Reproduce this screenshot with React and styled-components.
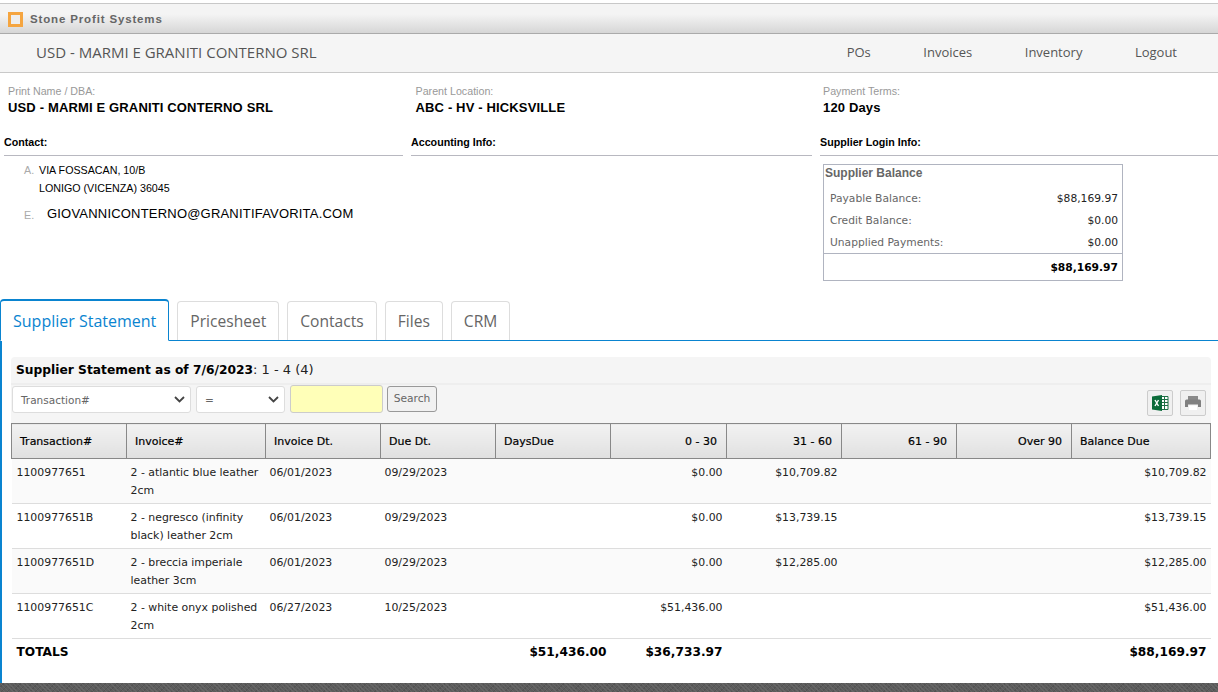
import React from "react"
import styled, { createGlobalStyle } from "styled-components"

const GlobalStyle = createGlobalStyle`
    html, body {
        margin: 0;
        padding: 0;
        background: #fff;
        overflow: hidden;
    }

    body {
        font-family: "Liberation Sans", Arial, sans-serif;
        color: #000;
    }
`

const Page = styled.div`
    width: 1218px;
    height: 692px;
    display: flex;
    flex-direction: column;
    overflow: hidden;
    background: #fff;
`

const TitleBar = styled.div`
    margin-top: 3px;
    height: 29px;
    flex: none;
    display: flex;
    align-items: center;
    gap: 7px;
    padding-left: 8px;
    border-top: 1px solid #c8c8c8;
    border-bottom: 1px solid #aaa;
    background: linear-gradient(#f4f4f4 0%, #f4f4f4 35%, #d6d6d6 100%);
`

const Logo = styled.div`
    width: 9px;
    height: 9px;
    border: 3px solid #f5a540;
    background: #eee;
    margin-top: 1px;
`

const BrandName = styled.span`
    font-size: 11.5px;
    font-weight: 700;
    letter-spacing: 0.85px;
    color: #666;
`

const NavBar = styled.div`
    height: 38px;
    flex: none;
    display: flex;
    align-items: center;
    justify-content: space-between;
    padding-left: 36px;
    background: #f5f5f5;
    border-bottom: 1px solid #c9c9c9;
    font-family: "Open Sans", sans-serif;
    color: #555;
`

const NavTitle = styled.div`
    font-size: 15px;
    margin-top: -2px;
`

const NavLinks = styled.div`
    display: flex;
    font-size: 13px;
    margin-right: 41px;
    gap: 52.5px;
    margin-top: -2px;
`

const InfoRow = styled.div`
    display: grid;
    flex: none;
    grid-template-columns: 407.5px 407.5px 1fr;
    padding: 12px 0 0 8px;
    height: 42px;
`

const InfoLabel = styled.div`
    font-size: 10.7px;
    line-height: 12px;
    color: #999;
`

const InfoValue = styled.div`
    font-size: 13px;
    font-weight: 700;
    line-height: 14px;
    margin-top: 4px;
    letter-spacing: 0.15px;
`

const Sections = styled.div`
    display: grid;
    flex: none;
    grid-template-columns: 407px 409px 1fr;
    padding-left: 4px;
`

const SectionHead = styled.div`
    font-size: 10.7px;
    font-weight: 700;
    line-height: 13px;
    padding: 9px 0 6px;
    margin-right: ${(p) => (p.$last ? "0" : "8px")};
    border-bottom: 1px solid #b8b8c0;
`

const SectionBody = styled.div`
    height: 143px;
`

const AddressRow = styled.div`
    display: flex;
    padding: 5px 0 0 20px;
`

const RowTag = styled.span`
    width: 15px;
    font-size: 10.7px;
    color: #aaa;
    margin-top: 3px;
`

const AddressText = styled.div`
    font-size: 10.7px;
    line-height: 18px;
`

const EmailRow = styled.div`
    display: flex;
    align-items: center;
    padding: 9px 0 0 20px;
`

const EmailText = styled.span`
    font-size: 13px;
    margin-left: 8px;
    letter-spacing: 0.2px;
`

const BalanceBox = styled.div`
    width: 298px;
    margin: 8px 0 0 3px;
    border: 1px solid #b0b4c0;
    font-family: "DejaVu Sans", Verdana, sans-serif;
    font-size: 10.7px;
`

const BalanceTitle = styled.div`
    font-family: "Liberation Sans", Arial, sans-serif;
    font-size: 12px;
    font-weight: 700;
    color: #666;
    line-height: 14px;
    padding: 1px 0 7px 1px;
`

const BalanceLine = styled.div`
    display: flex;
    justify-content: space-between;
    height: 22px;
    line-height: 24px;
    padding: 0 4px 0 6px;
    color: #666;

    b {
        font-weight: 400;
        color: #222;
    }
`

const BalanceTotal = styled.div`
    border-top: 1px solid #b0b4c0;
    text-align: right;
    font-weight: 700;
    height: 26px;
    line-height: 28px;
    padding-right: 4px;
`

const TabStrip = styled.div`
    height: 41px;
    flex: none;
    display: flex;
    align-items: flex-end;
    gap: 8px;
    border-bottom: 1px solid #0a84d0;
    font-family: "Open Sans", sans-serif;
    font-size: 15.6px;
`

const Tab = styled.div`
    height: 38px;
    line-height: 38px;
    padding: 0 12px;
    border-radius: 4px 4px 0 0;
    border: 1px solid #ddd;
    border-bottom: none;
    color: #666;
    ${(p) =>
        p.$active &&
        `
        height: 39px;
        line-height: 40px;
        font-size: 16px;
        color: #0a84d0;
        background: #fff;
        border: 1px solid #0a84d0;
        border-top-width: 2px;
        border-bottom: 1px solid #fff;
        margin-bottom: -1px;
    `}
`

const TabBody = styled.div`
    flex: 1;
    min-height: 0;
    border-left: 2px solid #0a84d0;
    padding: 16px 7px 0 9px;
`

const GridPanel = styled.div`
    background: #f5f5f5;
    border-radius: 4px 4px 0 0;
`

const GridTitle = styled.div`
    box-sizing: border-box;
    height: 28px;
    line-height: 26px;
    padding-left: 5px;
    border-bottom: 2px solid #eee;
    font-family: "DejaVu Sans", Verdana, sans-serif;
    font-size: 13px;
    color: #222;

    b {
        font-size: 12.25px;
        color: #000;
    }
`

const Toolbar = styled.div`
    height: 37px;
    display: flex;
    align-items: flex-start;
    padding: 1px 0 0 1px;
    gap: 5px;
`

const FieldSelect = styled.div`
    box-sizing: border-box;
    width: ${(p) => p.$w}px;
    height: 27px;
    display: flex;
    align-items: center;
    justify-content: space-between;
    padding: 0 5px 0 8px;
    background: #fff;
    border: 1px solid #ddd;
    border-radius: 3px;
    font-family: "DejaVu Sans", Verdana, sans-serif;
    font-size: 10.5px;
    color: #666;
`

const SearchInput = styled.div`
    box-sizing: border-box;
    width: 93px;
    height: 28px;
    margin-top: -1px;
    background: #ffffb8;
    border: 1px solid #ccc;
    border-radius: 3px;
`

const SearchButton = styled.div`
    box-sizing: border-box;
    width: 50px;
    height: 26px;
    margin-left: -1px;
    line-height: 23px;
    text-align: center;
    background: #f1f1f1;
    border: 1px solid #999;
    border-radius: 3px;
    font-family: "DejaVu Sans", Verdana, sans-serif;
    font-size: 10.7px;
    color: #666;
`

const ToolIcons = styled.div`
    display: flex;
    gap: 7px;
    margin-left: auto;
    margin-top: 4px;
    margin-right: 5px;
`

const IconButton = styled.div`
    box-sizing: border-box;
    width: 26px;
    height: 26px;
    display: flex;
    align-items: center;
    justify-content: center;
    border: 1px solid #ccc;
    border-radius: 2px;
    background: #f0f0f0;
`

const Table = styled.table`
    width: 1199px;
    border-collapse: collapse;
    table-layout: fixed;
    font-family: "DejaVu Sans", Verdana, sans-serif;
    font-size: 10.9px;
    background: #fff;
`

const HeadCell = styled.th`
    height: 35px;
    padding: 0 ${(p) => (p.$right ? "9px" : "8px")};
    box-sizing: border-box;
    border: 1px solid #888;
    background: linear-gradient(#f2f2f2, #e0e0e0);
    font-weight: 400;
    font-size: 11px;
    color: #000;
    text-align: ${(p) => (p.$right ? "right" : "left")};
    -webkit-text-stroke: 0.2px #000;
`

const BodyRow = styled.tr`
    height: 45px;
    background: ${(p) => (p.$shade ? "#fafafa" : "#fff")};
    border-bottom: 1px solid #ddd;
`

const Cell = styled.td`
    vertical-align: top;
    padding: 5px 4px 0;
    line-height: 18px;
    color: #222;
    text-align: ${(p) => (p.$right ? "right" : "left")};

    &:first-child {
        padding-left: 5px;
    }
`

const TotalCell = styled.td`
    padding: 4px 4px 0;
    line-height: 18px;
    font-weight: 700;
    font-size: 12.2px;
    text-align: ${(p) => (p.$right ? "right" : "left")};

    &:first-child {
        padding-left: 5px;
    }
`

const FooterBand = styled.div`
    height: 9px;
    flex: none;
    background-color: #5c5c5c;
    background-image: repeating-linear-gradient(45deg, #666 0 1px, transparent 1px 3px),
        repeating-linear-gradient(-45deg, #525252 0 1px, transparent 1px 4px);
`

const columns = [
    { label: "Transaction#", w: 115 },
    { label: "Invoice#", w: 139 },
    { label: "Invoice Dt.", w: 115 },
    { label: "Due Dt.", w: 115 },
    { label: "DaysDue", w: 115 },
    { label: "0 - 30", w: 116, right: true },
    { label: "31 - 60", w: 115, right: true },
    { label: "61 - 90", w: 115, right: true },
    { label: "Over 90", w: 115, right: true },
    { label: "Balance Due", w: 139 },
]

const rows = [
    ["1100977651", "2 - atlantic blue leather 2cm", "06/01/2023", "09/29/2023", "$0.00", "$10,709.82", "$10,709.82"],
    ["1100977651B", "2 - negresco (infinity black) leather 2cm", "06/01/2023", "09/29/2023", "$0.00", "$13,739.15", "$13,739.15"],
    ["1100977651D", "2 - breccia imperiale leather 3cm", "06/01/2023", "09/29/2023", "$0.00", "$12,285.00", "$12,285.00"],
    ["1100977651C", "2 - white onyx polished 2cm", "06/27/2023", "10/25/2023", "$51,436.00", "", "$51,436.00"],
]

function Chevron() {
    return (
        <svg width="11" height="7" viewBox="0 0 11 7" fill="none">
            <path d="M1 1l4.5 4.5L10 1" stroke="#444" strokeWidth="1.8" />
        </svg>
    )
}

function ExcelIcon() {
    return (
        <svg width="18" height="18" viewBox="0 0 18 18">
            <path d="M10 2.5h7v13h-7z" fill="#fff" stroke="#1d7044" />
            <path d="M10 5.5h7M10 8.5h7M10 11.5h7M13.5 2.5v13" stroke="#1d7044" />
            <path d="M1 2.5L11 1v16L1 15.5z" fill="#0b6b3a" />
            <path d="M4 6l3.5 6M7.5 6L4 12" stroke="#fff" strokeWidth="1.4" />
        </svg>
    )
}

function PrintIcon() {
    return (
        <svg width="18" height="16" viewBox="0 0 18 16">
            <path d="M4 1h10v4H4z" fill="#8a8a8a" />
            <path d="M2.5 4.5h13A1.5 1.5 0 0 1 17 6v6h-3V9.5H4V12H1V6a1.5 1.5 0 0 1 1.5-1.5z" fill="#808080" />
            <path d="M5 10.5h8V15H5z" fill="#fff" />
        </svg>
    )
}

export default function App() {
    return (
        <Page>
            <GlobalStyle />

            <TitleBar>
                <Logo />
                <BrandName>Stone Profit Systems</BrandName>
            </TitleBar>

            <NavBar>
                <NavTitle>USD - MARMI E GRANITI CONTERNO SRL</NavTitle>
                <NavLinks>
                    <span>POs</span>
                    <span>Invoices</span>
                    <span>Inventory</span>
                    <span>Logout</span>
                </NavLinks>
            </NavBar>

            <InfoRow>
                <div>
                    <InfoLabel>Print Name / DBA:</InfoLabel>
                    <InfoValue>USD - MARMI E GRANITI CONTERNO SRL</InfoValue>
                </div>
                <div>
                    <InfoLabel>Parent Location:</InfoLabel>
                    <InfoValue>ABC - HV - HICKSVILLE</InfoValue>
                </div>
                <div>
                    <InfoLabel>Payment Terms:</InfoLabel>
                    <InfoValue>120 Days</InfoValue>
                </div>
            </InfoRow>

            <Sections>
                <div>
                    <SectionHead>Contact:</SectionHead>
                    <SectionBody>
                        <AddressRow>
                            <RowTag>A.</RowTag>
                            <AddressText>
                                VIA FOSSACAN, 10/B
                                <br />
                                LONIGO (VICENZA) 36045
                            </AddressText>
                        </AddressRow>
                        <EmailRow>
                            <RowTag>E.</RowTag>
                            <EmailText>GIOVANNICONTERNO@GRANITIFAVORITA.COM</EmailText>
                        </EmailRow>
                    </SectionBody>
                </div>
                <div>
                    <SectionHead>Accounting Info:</SectionHead>
                </div>
                <div>
                    <SectionHead $last>Supplier Login Info:</SectionHead>
                    <BalanceBox>
                        <BalanceTitle>Supplier Balance</BalanceTitle>
                        <BalanceLine>
                            Payable Balance: <b>$88,169.97</b>
                        </BalanceLine>
                        <BalanceLine>
                            Credit Balance: <b>$0.00</b>
                        </BalanceLine>
                        <BalanceLine>
                            Unapplied Payments: <b>$0.00</b>
                        </BalanceLine>
                        <BalanceTotal>$88,169.97</BalanceTotal>
                    </BalanceBox>
                </div>
            </Sections>

            <TabStrip>
                <Tab $active>Supplier Statement</Tab>
                <Tab>Pricesheet</Tab>
                <Tab>Contacts</Tab>
                <Tab>Files</Tab>
                <Tab>CRM</Tab>
            </TabStrip>

            <TabBody>
                <GridPanel>
                    <GridTitle>
                        <b>Supplier Statement as of 7/6/2023</b>: 1 - 4 (4)
                    </GridTitle>
                    <Toolbar>
                        <FieldSelect $w={179}>
                            Transaction#
                            <Chevron />
                        </FieldSelect>
                        <FieldSelect $w={89}>
                            =
                            <Chevron />
                        </FieldSelect>
                        <SearchInput />
                        <SearchButton>Search</SearchButton>
                        <ToolIcons>
                            <IconButton>
                                <ExcelIcon />
                            </IconButton>
                            <IconButton>
                                <PrintIcon />
                            </IconButton>
                        </ToolIcons>
                    </Toolbar>
                </GridPanel>

                <Table>
                    <colgroup>
                        {columns.map((c) => (
                            <col key={c.label} style={{ width: c.w }} />
                        ))}
                    </colgroup>
                    <thead>
                        <tr>
                            {columns.map((c) => (
                                <HeadCell key={c.label} $right={c.right}>
                                    {c.label}
                                </HeadCell>
                            ))}
                        </tr>
                    </thead>
                    <tbody>
                        {rows.map((r, i) => (
                            <BodyRow key={r[0]} $shade={i % 2 === 0}>
                                <Cell>{r[0]}</Cell>
                                <Cell>{r[1]}</Cell>
                                <Cell>{r[2]}</Cell>
                                <Cell>{r[3]}</Cell>
                                <Cell />
                                <Cell $right>{r[4]}</Cell>
                                <Cell $right>{r[5]}</Cell>
                                <Cell />
                                <Cell />
                                <Cell $right>{r[6]}</Cell>
                            </BodyRow>
                        ))}
                        <tr>
                            <TotalCell>TOTALS</TotalCell>
                            <TotalCell />
                            <TotalCell />
                            <TotalCell />
                            <TotalCell $right>$51,436.00</TotalCell>
                            <TotalCell $right>$36,733.97</TotalCell>
                            <TotalCell />
                            <TotalCell />
                            <TotalCell />
                            <TotalCell $right>$88,169.97</TotalCell>
                        </tr>
                    </tbody>
                </Table>
            </TabBody>

            <FooterBand />
        </Page>
    )
}
